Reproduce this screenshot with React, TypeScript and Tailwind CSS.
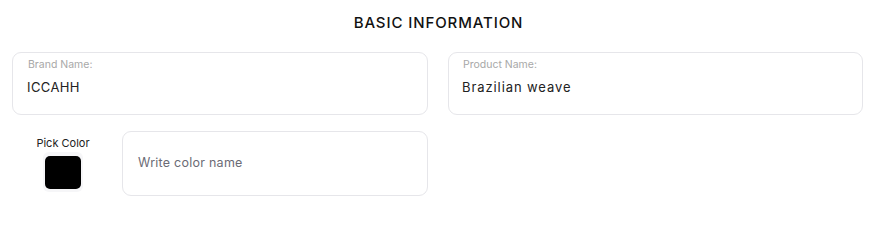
export default function App() {
  return (
    <div
      className="w-[877px] h-[226px] bg-white pt-[14px] pl-[12px] pr-[14px]"
      style={{ fontFamily: 'Inter, "Noto Sans", sans-serif' }}
    >
      <h2 className="text-center text-[15px] font-medium tracking-[0.06em] text-[#111] leading-[18px] ml-[2px]">
        BASIC INFORMATION
      </h2>

      <div className="mt-[20px] grid grid-cols-[416px_415px] gap-x-[20px] gap-y-[16px]">
        <div className="h-[63px] rounded-[9px] border border-[#e6e6ea] px-[14px] pt-[5px]">
          <div className="text-[10.5px] text-[#a8a8a8] leading-[14px] ml-[1px]">Brand Name:</div>
          <div className="mt-[6px] text-[13px] text-[#222] tracking-[0.03em] leading-[18px]">ICCAHH</div>
        </div>

        <div className="h-[63px] rounded-[9px] border border-[#e6e6ea] px-[13px] pt-[5px]">
          <div className="text-[10.5px] text-[#a8a8a8] leading-[14px] ml-[1px]">Product Name:</div>
          <div className="mt-[6px] text-[13px] text-[#222] tracking-[0.07em] leading-[18px]">Brazilian weave</div>
        </div>

        <div className="flex gap-[8px]">
          <div className="w-[102px] flex flex-col items-center pt-[5px]">
            <span className="text-[11px] text-[#222] leading-[14px]">Pick Color</span>
            <div className="mt-[2px] w-[40px] h-[40px] rounded-[6px] bg-[#f6f6f8] flex items-center justify-center">
              <div className="w-[36px] h-[33px] rounded-[5px] bg-black" />
            </div>
          </div>
          <div className="flex-1 h-[65px] rounded-[9px] border border-[#e6e6ea] flex items-center px-[15px]">
            <span className="text-[12.5px] text-[#6b6b75] tracking-[0.02em]">Write color name</span>
          </div>
        </div>
      </div>
    </div>
  );
}
